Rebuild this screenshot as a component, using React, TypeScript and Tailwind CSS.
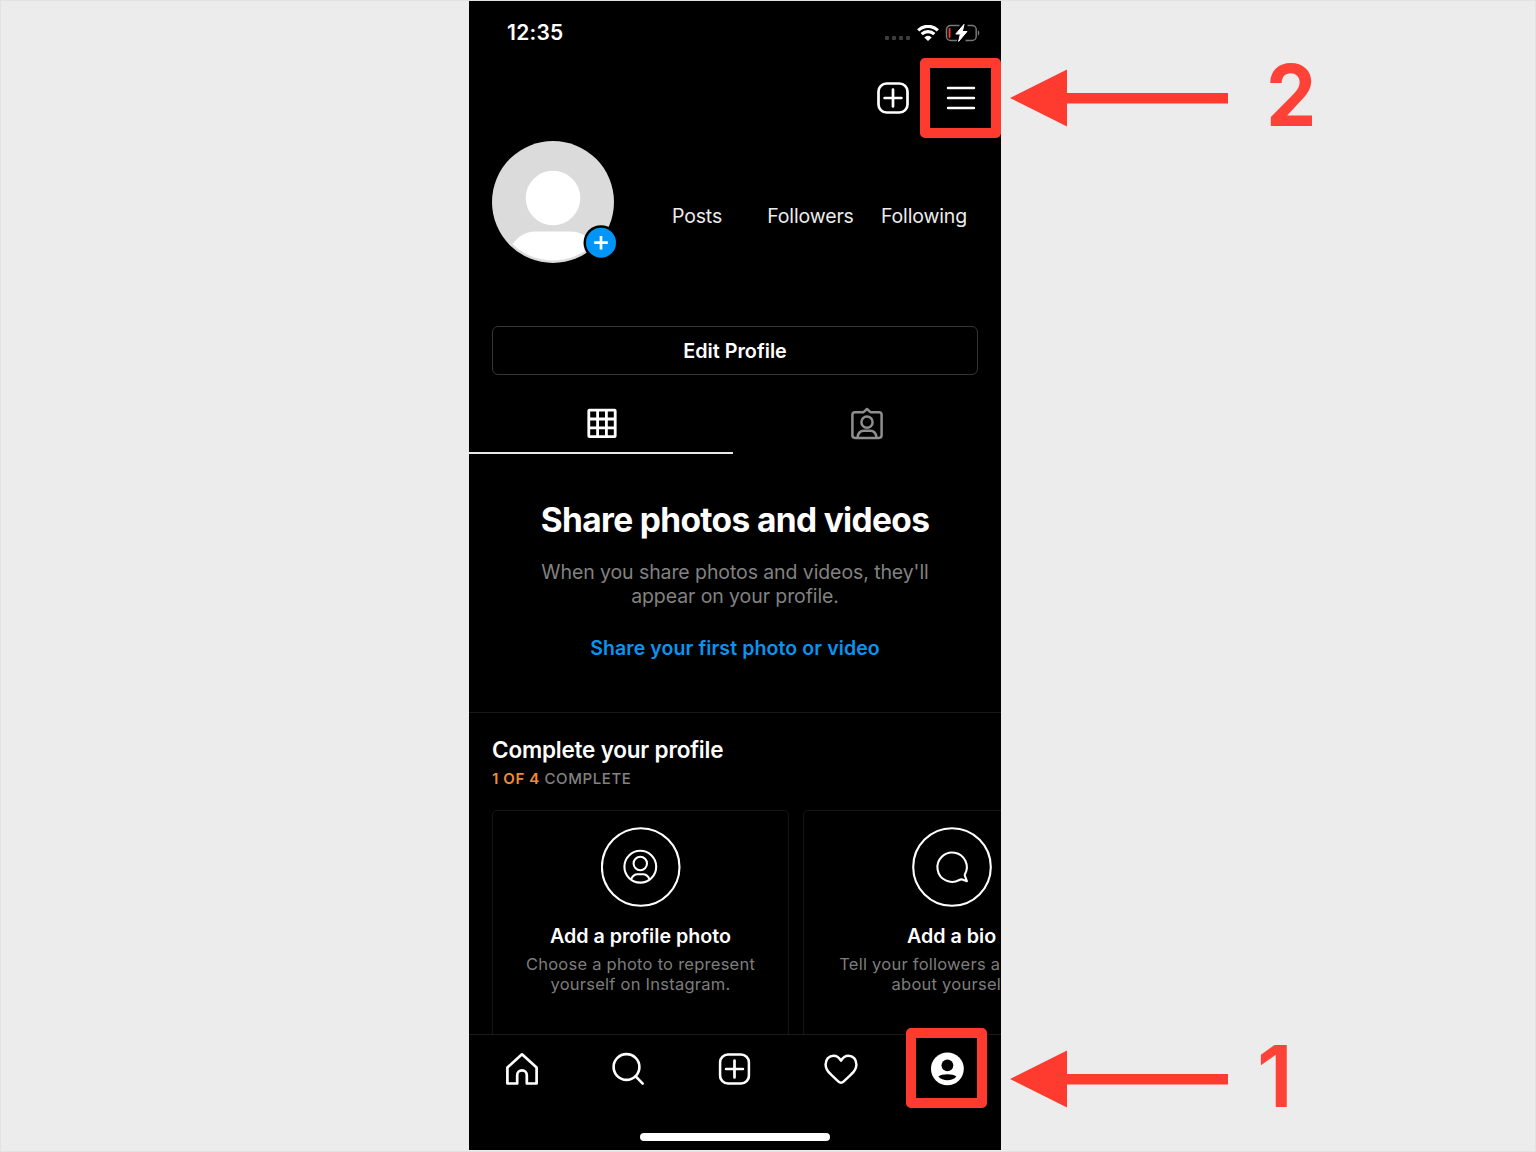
import React from "react";

function StatusBar() {
  return (
    <div className="flex h-[57px] shrink-0 items-start justify-between pl-[38px] pr-[20px] pt-[20px]">
      <span className="text-[21px] font-semibold leading-6 tracking-[0.25px]">12:35</span>
      <div className="flex h-6 items-center">
        <div className="mr-[7px] mt-[10px] flex gap-[2.6px]">
          {[0, 1, 2, 3].map((dot) => (
            <span key={dot} className="size-[4.4px] rounded-[1px] bg-[#3d3d3d]" />
          ))}
        </div>
        <svg width="22" height="17" viewBox="0 0 22 17" className="mr-[6px]" fill="none" stroke="white" strokeWidth="3.200">
          <path d="M1.200 5.400a13.8 13.8 0 0 1 19.6 0" />
          <path d="M4.700 9.200a8.900 8.900 0 0 1 12.600 0" />
          <path d="M11 16l-3.700-3.600a5.200 5.200 0 0 1 7.400 0z" fill="white" stroke="none" />
        </svg>
        <svg width="36" height="18" viewBox="0 0 36 18" fill="none">
          <path d="M14.500 1.600H5.500a4 4 0 0 0-4 4v6.800a4 4 0 0 0 4 4h6.500M20.500 16.400h6.700a4 4 0 0 0 4-4V5.600a4 4 0 0 0-4-4H22.500" stroke="#777" strokeWidth="1.500" />
          <path d="M32.800 6.300c2 .8 2 4.600 0 5.400z" fill="#777" />
          <rect x="3.600" y="4" width="1.900" height="10" rx=".8" fill="#f23b30" />
          <path d="M19 .4 10.800 10h4.600L13.600 17.400l8.400-9.900h-4.700z" fill="white" stroke="white" strokeWidth="1" strokeLinejoin="round" />
        </svg>
      </div>
    </div>
  );
}

function PlusSquare() {
  return (
    <svg width="32" height="32" viewBox="0 0 32 32" fill="none" stroke="white" strokeWidth="2.7" strokeLinecap="round">
      <rect x="1.500" y="1.500" width="29" height="29" rx="8" />
      <path d="M16 7.600v16.800M7.600 16h16.800" />
    </svg>
  );
}

function Avatar() {
  return (
    <div className="relative size-[122px] shrink-0">
      <svg width="122" height="122" viewBox="0 0 122 122">
        <defs>
          <clipPath id="avatar-clip">
            <circle cx="61" cy="61" r="58.500" />
          </clipPath>
        </defs>
        <circle cx="61" cy="61" r="61" fill="#dbdbdb" />
        <circle cx="61" cy="57" r="27.300" fill="white" />
        <path d="M17 108C24 97 31 90.500 44 90.500h34c13 0 20 6.500 27 17.500v20H17z" fill="white" clipPath="url(#avatar-clip)" />
      </svg>
      <svg width="36" height="36" viewBox="0 0 36 36" className="absolute left-[91px] top-[84px]">
        <circle cx="18" cy="17.700" r="17.500" fill="black" />
        <circle cx="18" cy="17.700" r="15" fill="#0095f6" />
        <path d="M18 10.900v13.600M11.200 17.700h13.600" stroke="white" strokeWidth="2.700" />
      </svg>
    </div>
  );
}

function Stats() {
  return (
    <div className="flex pt-[63px] text-[19.5px] leading-6 tracking-[-0.14px] text-[#ececec]">
      <span className="w-[114px] text-center">Posts</span>
      <span className="w-[113px] text-center">Followers</span>
      <span className="w-[114px] text-center">Following</span>
    </div>
  );
}

function Tabs() {
  return (
    <div className="flex h-[79px] shrink-0">
      <div className="flex w-[264px] justify-center border-b-2 border-[#e8e8e8] pt-[33px]">
        <svg width="30" height="30" viewBox="0 0 30 30" fill="none" stroke="white" strokeWidth="2.800" className="ml-[2px]">
          <rect x="1.800" y="2.200" width="26.400" height="26.400" rx=".6" />
          <path d="M10.600 1.400v28M19.400 1.400v28M1 11h28M1 19.800h28" />
        </svg>
      </div>
      <div className="flex flex-1 justify-center pt-[32px]">
        <svg width="32" height="33" viewBox="0 -0.5 32 33" fill="none" stroke="#8e8e8e" strokeWidth="2.500" strokeLinejoin="round">
          <path d="M4 4.700h8.500L16 1.500l3.500 3.200H28a2.600 2.600 0 0 1 2.600 2.600v20.500a2.600 2.600 0 0 1-2.600 2.600H4a2.600 2.600 0 0 1-2.600-2.600V7.300A2.600 2.600 0 0 1 4 4.700z" />
          <circle cx="16" cy="14.700" r="5.600" />
          <path d="M6.500 30c.4-4.400 3-6.800 6.500-6.800h6c3.500 0 6.100 2.400 6.500 6.800" />
        </svg>
      </div>
    </div>
  );
}

function EmptyState() {
  return (
    <section className="flex h-[259px] shrink-0 flex-col items-center border-b border-[#181818] text-center">
      <h1 className="mt-[46px] text-[33.5px] font-bold leading-10 tracking-[-0.65px] whitespace-nowrap">Share photos and videos</h1>
      <p className="mt-[21px] text-[19.5px] leading-[23.500px] tracking-[-0.09px] text-[#828282] whitespace-nowrap">
        When you share photos and videos, they'll
        <br />
        appear on your profile.
      </p>
      <a className="mt-[28px] text-[19.5px] font-semibold leading-6 tracking-[0.11px] text-[#0895f0] whitespace-nowrap">Share your first photo or video</a>
    </section>
  );
}

type CardProps = { icon: React.ReactNode; title: string; lines: [string, string] };

function Card({ icon, title, lines }: CardProps) {
  return (
    <article className="flex h-[260px] w-[297px] shrink-0 flex-col items-center rounded-[5px] border border-[#161616] pt-[16px]">
      {icon}
      <h3 className="mt-[17px] text-[19.700px] font-semibold leading-6 whitespace-nowrap">{title}</h3>
      <p className="mt-[6px] text-center text-[16.500px] leading-5 tracking-[0.25px] text-[#7d7d7d] whitespace-nowrap">
        {lines[0]}
        <br />
        {lines[1]}
      </p>
    </article>
  );
}

function PersonIcon() {
  return (
    <svg width="80" height="80" viewBox="0 0 80 80" fill="none" stroke="white" strokeWidth="2.100">
      <circle cx="39.700" cy="40" r="38.800" />
      <circle cx="39.300" cy="39.700" r="15.900" />
      <circle cx="39.300" cy="36.500" r="6.700" />
      <path d="M30.100 52.400c1.400-3.800 3.600-5.200 6.600-5.200h5.200c3 0 5.200 1.400 6.600 5.200" />
    </svg>
  );
}

function BubbleIcon() {
  return (
    <svg width="80" height="80" viewBox="0 0 80 80" fill="none" stroke="white" strokeWidth="2.100" strokeLinejoin="round">
      <circle cx="40" cy="40" r="38.800" />
      <path d="M52.800 47.600A14.700 14.700 0 1 0 47.300 53C48.400 52.400 49.200 52.200 50.200 52.500L54.900 54.200 53.300 49.900C53 49.100 52.500 48.400 52.800 47.600z" />
    </svg>
  );
}

function CompleteProfile() {
  return (
    <section className="min-h-0 flex-1 overflow-hidden pl-[23px] pt-[22px]">
      <h2 className="text-[22.500px] font-semibold leading-[30px] tracking-[-0.2px]">Complete your profile</h2>
      <p className="mt-[4px] text-[15px] font-medium leading-5 tracking-[0.6px] text-[#828282]">
        <span className="font-semibold text-[#f08b3c]">1 OF 4</span> COMPLETE
      </p>
      <div className="mt-[21px] flex gap-[14px]">
        <Card icon={<PersonIcon />} title="Add a profile photo" lines={["Choose a photo to represent", "yourself on Instagram."]} />
        <Card icon={<BubbleIcon />} title="Add a bio" lines={["Tell your followers a little bit", "about yourself."]} />
      </div>
    </section>
  );
}

function BottomNav() {
  return (
    <nav className="relative flex h-[116px] shrink-0 flex-col border-t border-[#1a1a1a]">
      <div className="grid h-[68px] w-[532px] grid-cols-5 place-items-center">
        <svg width="34" height="34" viewBox="0 0 34 34" fill="none" stroke="white" strokeWidth="2.700" strokeLinejoin="round">
          <path d="M17 2.300 31.600 15.500V31.500H21.800v-8.300a4.800 4.800 0 0 0-9.600 0v8.300H2.400V15.500z" />
        </svg>
        <svg width="34" height="34" viewBox="0.500 0 34 34" fill="none" stroke="white" strokeWidth="2.600" strokeLinecap="round">
          <circle cx="15" cy="15" r="12.900" />
          <path d="m24.200 24.300 7 7.300" />
        </svg>
        <div className="-translate-x-[0.500px]">
          <PlusSquare />
        </div>
        <svg width="34" height="34" viewBox="0 0 34 34" fill="none" stroke="white" strokeWidth="2.500" strokeLinejoin="round">
          <path d="M17 8.700c-1.700-3-4.200-5-7.400-5-4.600 0-8 3.800-8 8.700 0 4.200 2.200 7.200 5.200 9.900l7.700 7.300c1.500 1.500 3.500 1.500 5 0l7.700-7.300c3-2.700 5.200-5.700 5.200-9.900 0-4.900-3.400-8.700-8-8.700-3.200 0-5.700 2-7.400 5z" />
        </svg>
        <svg width="34" height="34" viewBox="0.600 0.200 34 34">
          <circle cx="17" cy="17" r="16.400" fill="white" />
          <circle cx="17" cy="13.500" r="5.900" fill="black" />
          <path d="M8 24.800c3.500-3.100 14.500-3.100 18 0-4 5-14 5-18 0z" fill="black" />
        </svg>
      </div>
      <div className="mx-auto mt-[30px] h-[7.500px] w-[190px] rounded-full bg-white" />
      <div className="absolute left-[437px] top-[-7px] h-[80px] w-[81px] rounded-[5px] border-[10.500px] border-[#ff3b30]" />
    </nav>
  );
}

function Arrow() {
  return (
    <svg width="218" height="58" viewBox="0 0 218 58" fill="#ff3b30">
      <path d="M0 29 57 .5V24h161v10.600H57V57.500z" />
    </svg>
  );
}

export default function App() {
  return (
    <main className="flex h-[1152px] w-[1536px] overflow-hidden border border-[#e2e2e2] bg-[#ececec] font-['Inter',sans-serif]">
      <div className="w-[468px] shrink-0" />
      <div className="relative flex h-[1149px] w-[532px] shrink-0 flex-col bg-black text-white">
        <div className="flex min-h-0 flex-1 flex-col overflow-hidden">
          <StatusBar />
          <header className="flex h-[82px] shrink-0 items-center justify-end pb-[2px] pr-[25px]">
            <div className="mr-[37px]">
              <PlusSquare />
            </div>
            <svg width="30" height="26" viewBox="0 0 30 26" stroke="white" strokeWidth="2.400" strokeLinecap="round">
              <path d="M2 3h26M2 13h26M2 23h26" />
            </svg>
          </header>
          <section className="flex h-[186px] shrink-0 pl-[23px] pt-[0.500px]">
            <Avatar />
            <div className="w-[26px]" />
            <Stats />
          </section>
          <button className="mx-[23px] h-[49px] shrink-0 rounded-[6px] border-[1.500px] border-[#363636] text-[19.800px] font-semibold leading-6">
            Edit Profile
          </button>
          <Tabs />
          <EmptyState />
          <CompleteProfile />
        </div>
        <BottomNav />
        <div className="absolute left-[451px] top-[57px] h-[80px] w-[81px] rounded-[5px] border-[10.500px] border-[#ff3b30]" />
      </div>
      <aside className="flex flex-1 flex-col justify-between pb-[29px] pl-[9px] pt-[54px] text-[85px] leading-[90px] text-[#ff4238]">
        <div className="flex items-center">
          <Arrow />
          <span className="-mt-[4px] ml-[38px] origin-left scale-x-[0.94] font-bold">2</span>
        </div>
        <div className="flex items-center">
          <Arrow />
          <span className="-mt-[4px] ml-[29px] font-semibold">1</span>
        </div>
      </aside>
    </main>
  );
}
